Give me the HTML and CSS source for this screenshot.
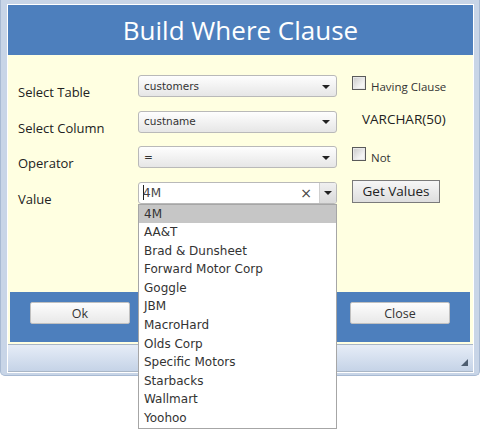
FILE: index.html
```html
<!DOCTYPE html>
<html>
<head>
<meta charset="utf-8">
<link rel="stylesheet" href="styles.css">
</head>
<body>
<div class="page">
<div class="window">
  <div class="inner">
    <div class="header">Build Where Clause</div>
    <div class="body">
      <div class="form">
        <div class="lbl">Select Table</div>
        <div class="select"><span>customers</span><i class="arrow"></i></div>
        <div class="side"><span class="cb"></span><span class="cbl">Having Clause</span></div>

        <div class="lbl">Select Column</div>
        <div class="select"><span>custname</span><i class="arrow"></i></div>
        <div class="side"><span class="type">VARCHAR(50)</span></div>

        <div class="lbl">Operator</div>
        <div class="select"><span>=</span><i class="arrow"></i></div>
        <div class="side"><span class="cb"></span><span class="cbl">Not</span></div>

        <div class="lbl">Value</div>
        <div class="combo">
          <div class="combo-input"><span class="caret"></span><span class="val">4M</span><span class="clear">×</span></div>
          <div class="combo-btn"><i class="arrow"></i></div>
          <ul class="list">
            <li class="sel">4M</li>
            <li>AA&amp;T</li>
            <li>Brad &amp; Dunsheet</li>
            <li>Forward Motor Corp</li>
            <li>Goggle</li>
            <li>JBM</li>
            <li>MacroHard</li>
            <li>Olds Corp</li>
            <li>Specific Motors</li>
            <li>Starbacks</li>
            <li>Wallmart</li>
            <li>Yoohoo</li>
          </ul>
        </div>
        <div class="side"><button class="getv">Get Values</button></div>
      </div>
    </div>
    <div class="footer">
      <button class="btn">Ok</button>
      <button class="btn">Close</button>
    </div>
    <div class="spacer"></div>
    <div class="status"><i class="grip"></i></div>
  </div>
</div>
</div>
</body>
</html>
```
FILE: styles.css
```css
* { box-sizing: border-box; }
html, body { margin: 0; padding: 0; background: #ffffff; }
body { font-family: "Open Sans", "DejaVu Sans", sans-serif; color: #222; }
.page { min-height: 430px; }

.window {
  width: 480px;
  height: 376px;
  background: #c8d5e7;
  border: 1px solid #a8bad3;
  border-top: none;
  padding: 4px 5px 4px 6px;
  border-radius: 0 0 5px 5px;
}
.inner {
  border: 1px solid #ffffff;
  background: #ffffe1;
  display: flex;
  flex-direction: column;
}
.header {
  height: 50px;
  background: #4d7fbd;
  color: #ffffff;
  font-size: 26px;
  display: flex;
  align-items: center;
  justify-content: center;
  padding-bottom: 1px;
}
.body {
  height: 237px;
  padding: 20px 0 0 10px;
}
.form {
  display: grid;
  grid-template-columns: 120px 199px auto;
  grid-auto-rows: 22px;
  row-gap: 13.5px;
}
.lbl {
  font-size: 13px;
  color: #222;
  line-height: 22px;
  margin-top: 6px;
}
.select {
  border: 1px solid #b9b9b9;
  border-radius: 3px;
  background: linear-gradient(#fefefe, #e6e6e6);
  display: flex;
  align-items: center;
  justify-content: space-between;
  padding: 0 6px 1px 5px;
  font-family: "DejaVu Sans", sans-serif;
  font-size: 10.5px;
  color: #333;
}
.arrow {
  width: 0;
  height: 0;
  border-left: 4px solid transparent;
  border-right: 4px solid transparent;
  border-top: 4px solid #222;
  margin-top: 2px;
}
.side {
  display: flex;
  align-items: center;
  padding-left: 15px;
}
.cb {
  width: 14px;
  height: 14px;
  border: 1px solid #5a5a5a;
  background: linear-gradient(135deg, #c9c9c9, #f4f4f4 70%);
  box-shadow: inset 0 0 0 1px #e8e8e8;
  margin-top: -7px;
}
.cbl {
  font-size: 11.5px;
  color: #333;
  margin-left: 5px;
}
.type {
  font-size: 13.5px;
  color: #222;
  padding-left: 10px;
  margin-top: -6px;
}
.combo {
  position: relative;
  display: flex;
  border: 1px solid #b9b9b9;
  border-radius: 3px;
  background: #fff;
}
.combo-input {
  flex: 1;
  display: flex;
  align-items: center;
  padding-left: 4px;
  font-family: "DejaVu Sans", sans-serif;
  font-size: 12px;
  color: #444;
}
.caret {
  width: 1px;
  height: 15px;
  background: #222;
  margin-right: -1px;
}
.val { flex: 1; }
.clear {
  font-family: "DejaVu Sans", sans-serif;
  font-size: 14px;
  color: #444;
  margin-right: 7px;
}
.combo-btn {
  width: 17px;
  background: linear-gradient(#f0f0f0, #dadada);
  border-left: 1px solid #cfcfcf;
  display: flex;
  align-items: center;
  justify-content: center;
  border-radius: 0 2px 2px 0;
}
.combo-btn .arrow { margin-top: 0; }
.list {
  position: absolute;
  left: -1px;
  right: -1px;
  top: 21px;
  margin: 0;
  padding: 0;
  list-style: none;
  background: #fff;
  border: 1px solid #a6a6a6;
  z-index: 10;
  font-family: "DejaVu Sans", sans-serif;
  font-size: 12px;
  color: #333;
}
.list li {
  height: 18.6px;
  line-height: 18.6px;
  padding-left: 5px;
}
.list li.sel { background: #c6c6c6; }
.getv {
  width: 88px;
  height: 23px;
  margin-top: -3px;
  border: 1px solid #7a7a7a;
  background: linear-gradient(#f6f6f6, #dedede);
  font-family: "Open Sans", sans-serif;
  font-size: 13.5px;
  color: #222;
  padding: 0;
}
.footer {
  height: 50px;
  margin: 0 3px 0 2px;
  background: #4d7fbd;
  display: flex;
  justify-content: space-between;
  align-items: flex-start;
  padding: 10px 20px 0 20px;
}
.btn {
  width: 100px;
  height: 22px;
  border: 1px solid #c0c0c0;
  border-radius: 2px;
  background: linear-gradient(#fdfdfd, #e8e8e8);
  font-family: "Open Sans", sans-serif;
  font-size: 12.5px;
  color: #333;
  padding: 0;
}
.spacer { height: 2px; }
.status {
  height: 28px;
  border-top: 1px solid #a9b6c6;
  border-bottom: 1px solid #a9b6c6;
  background: linear-gradient(#e6edf7, #c5d3e7);
  display: flex;
  justify-content: flex-end;
  align-items: flex-end;
  padding: 0 5px 5px 0;
}
.grip {
  width: 0;
  height: 0;
  border-left: 7px solid transparent;
  border-bottom: 7px solid #4d5d70;
}
```
